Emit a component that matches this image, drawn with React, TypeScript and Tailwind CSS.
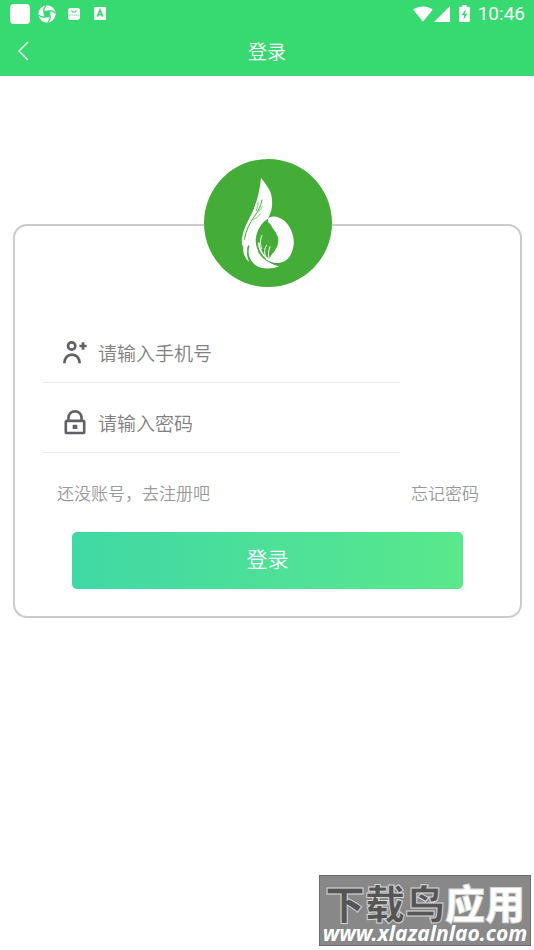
import { useState } from "react";
import type { FormEvent } from "react";

function StatusBar() {
  return (
    <div className="flex h-[27px] items-center justify-between pl-[10px] pr-[9px]">
      <div className="flex items-center">
        <span className="size-5 rounded-[4px] bg-white" />
        <svg viewBox="0 0 52 52" className="ml-2 size-[18px]" aria-hidden="true">
          <circle cx="26" cy="26" r="25" fill="#fff" />
          <circle cx="26" cy="26" r="10" fill="#37d971" />
          <g fill="none" stroke="#37d971" strokeWidth="4">
            <path d="M18 22C15 14 17 8 24 1" />
            <path d="M30 18c8-3 14-1 21 6" />
            <path d="M34 30c3 8 1 14-6 21" />
            <path d="M22 34c-8 3-14 1-21-6" />
          </g>
        </svg>
        <svg viewBox="0 0 34 34" className="ml-3 size-[12px]" aria-hidden="true">
          <rect width="34" height="34" rx="7" fill="#fff" />
          <path d="M10 6c2 8 12 8 14 0" fill="none" stroke="#37d971" strokeWidth="3" />
          <path d="M2 20h30" stroke="#37d971" strokeWidth="2" strokeDasharray="4 1" />
        </svg>
        <svg viewBox="0 0 36 39" className="ml-[14px] h-[13px] w-[12px]" aria-hidden="true">
          <rect width="36" height="39" rx="2" fill="#fff" />
          <path d="M10 29l8-20 8 20M13 23h10" fill="none" stroke="#37d971" strokeWidth="5" />
        </svg>
      </div>
      <div className="flex items-center text-white">
        <svg viewBox="0 0 60 48" className="h-4 w-5" fill="currentColor" aria-hidden="true">
          <path d="M1 11C18-2 42-2 59 11L30 47z" />
        </svg>
        <svg viewBox="0 0 48 48" className="ml-px size-4" fill="currentColor" aria-hidden="true">
          <path d="M48 0v48H0z" />
        </svg>
        <svg viewBox="0 0 32 51" className="ml-[9px] h-[17px] w-[11px]" aria-hidden="true">
          <path d="M10 0h12v5h7q3 0 3 3v40q0 3-3 3H3q-3 0-3-3V8q0-3 3-3h7z" fill="#fff" />
          <path d="M19 13L8 30h7l-2 14 12-18h-7z" fill="#37d971" />
        </svg>
        <span className="ml-2 font-[Roboto,sans-serif] text-[19px] leading-6">10:46</span>
      </div>
    </div>
  );
}

function Logo() {
  return (
    <svg viewBox="43 27 384 384" className="size-32" role="img" aria-label="logo">
      <circle cx="235" cy="219" r="192" fill="#43ad37" />
      <path
        d="M214 83C226 98 236 112 243 128C250 151 248 176 242 190L235 206C217 216 200 240 198 270C198 298 213 321 235 334C247 342 257 347 268 349C243 360 208 358 191 340C183 330 175 319 174 303L175 286C170 300 171 316 178 335C163 323 159 304 161 290C154 283 156 266 160 252C164 230 180 204 190 182C204 150 211 116 214 83Z"
        fill="#fff"
      />
      {/* Right leaf wraps the bowl and closes under it */}
      <path
        d="M235 206C240 199 256 197 268 203C284 208 298 224 305 242C315 266 315 292 303 314C288 343 252 347 222 324C230 328 237 328 241 323C246 310 267 297 266 268C266 258 258 252 258 246C250 238 244 222 235 216Z"
        fill="#fff"
      />
      <path d="M206 304C217 326 240 341 270 345" fill="none" stroke="#43ad37" strokeWidth="3" />
      <g fill="none" stroke="#43ad37" strokeLinecap="round">
        <path d="M217 150C213 170 205 184 195 198C181 217 169 241 164 268" strokeWidth="3" />
        <path d="M218 169C214 178 209 182 202 187" strokeWidth="2" />
        <path d="M212 192C205 202 196 206 189 209" strokeWidth="2" />
        <path d="M205 156C205 164 203 173 200 182" strokeWidth="2" />
        <path d="M177 288C173 304 174 320 183 334" strokeWidth="4" />
      </g>
      <g fill="none" stroke="#fff" strokeLinecap="round">
        <path d="M207 279C209 299 219 316 235 327" strokeWidth="5" />
        <path d="M217 256C211 270 211 282 216 296" strokeWidth="3" />
        <path d="M231 286C224 296 223 307 227 316" strokeWidth="3" />
        <path d="M241 290C237 300 234 313 238 323" strokeWidth="3" />
      </g>
    </svg>
  );
}

function UserPlusIcon() {
  return (
    <svg viewBox="0 0 72 72" className="size-6 shrink-0" fill="none" stroke="#5f6166" strokeWidth="8" aria-hidden="true">
      <circle cx="26" cy="15" r="11" />
      <path d="M4 67C4 32 50 32 50 67" />
      <path d="M60 4v22M49 15h22" />
    </svg>
  );
}

function LockIcon() {
  return (
    <svg viewBox="0 0 72 76" className="h-[25px] w-6 shrink-0" fill="none" stroke="#5f6166" strokeWidth="8" aria-hidden="true">
      <rect x="8" y="33" width="56" height="37" rx="4" />
      <path d="M16 32V25C16-3 56-3 56 25v7" />
      <rect x="29" y="45" width="14" height="13" rx="2" fill="#5f6166" stroke="none" />
    </svg>
  );
}

export default function App() {
  const [phone, setPhone] = useState("");
  const [password, setPassword] = useState("");

  function handleSubmit(e: FormEvent) {
    e.preventDefault();
  }

  return (
    <div className="relative min-h-screen bg-white font-['Noto_Sans_CJK_SC',sans-serif]">
      <header className="bg-[#37d971] pb-px">
        <StatusBar />
        <div className="grid h-12 grid-cols-[48px_1fr_48px] items-center text-white">
          <button type="button" aria-label="返回" className="flex h-full items-center pl-[17px]">
            <svg viewBox="0 0 12 20" className="h-5 w-3" fill="none" stroke="currentColor" strokeWidth="1.4" aria-hidden="true">
              <path d="M11 1L2 10l9 9" />
            </svg>
          </button>
          <h1 className="text-center text-[19px] font-[350] leading-7">登录</h1>
        </div>
      </header>

      <main className="pt-[148px] pr-3 pb-24 pl-[13px]">
        <form onSubmit={handleSubmit} className="rounded-[14px] border-2 border-[#cbcbcb] px-7 pb-[27px]">
          <div className="-mt-[67px] flex justify-center">
            <Logo />
          </div>

          {/* Fields */}
          <div className="mt-9 mr-[92px]">
            <label className="flex h-[60px] items-center gap-[11px] border-b border-[#ececec] pl-5">
              <UserPlusIcon />
              <input
                type="tel"
                aria-label="手机号"
                value={phone}
                onChange={(e) => setPhone(e.target.value)}
                placeholder="请输入手机号"
                className="min-w-0 flex-1 text-[19px] font-[350] leading-7 text-gray-800 outline-none placeholder:text-[#808080]"
              />
            </label>
            <label className="mt-[10px] flex h-[60px] items-center gap-[11px] border-b border-[#ececec] pl-5">
              <LockIcon />
              <input
                type="password"
                aria-label="密码"
                value={password}
                onChange={(e) => setPassword(e.target.value)}
                placeholder="请输入密码"
                className="min-w-0 flex-1 text-[19px] font-[350] leading-7 text-gray-800 outline-none placeholder:text-[#808080]"
              />
            </label>
          </div>

          {/* Links */}
          <div className="mt-7 flex justify-between pl-[14px] pr-[13px] text-[17px] font-[350] leading-6 text-[#999]">
            <a href="#register">还没账号，去注册吧</a>
            <a href="#forgot">忘记密码</a>
          </div>

          <div className="mt-[27px] px-[29px]">
            <button
              type="submit"
              className="h-[57px] w-full rounded-[5px] bg-linear-to-r from-[#40d8a5] to-[#59e88b] pb-1 text-[21px] font-[350] text-white"
            >
              登录
            </button>
          </div>
        </form>
      </main>

      <div className="absolute right-[3px] bottom-1 flex h-[71px] w-[212px] flex-col items-center justify-between border border-[#6b6b6b] bg-[#888] pt-2 whitespace-nowrap">
        <div className="text-[40px] font-black leading-9 text-[#555] [-webkit-text-stroke:1px_#d5d5d5]">
          下载鸟<span className="text-white">应用</span>
        </div>
        <div className="font-['Noto_Sans',sans-serif] text-[21px] font-bold italic leading-6 text-white">www.xlazalnlao.com</div>
      </div>
    </div>
  );
}
